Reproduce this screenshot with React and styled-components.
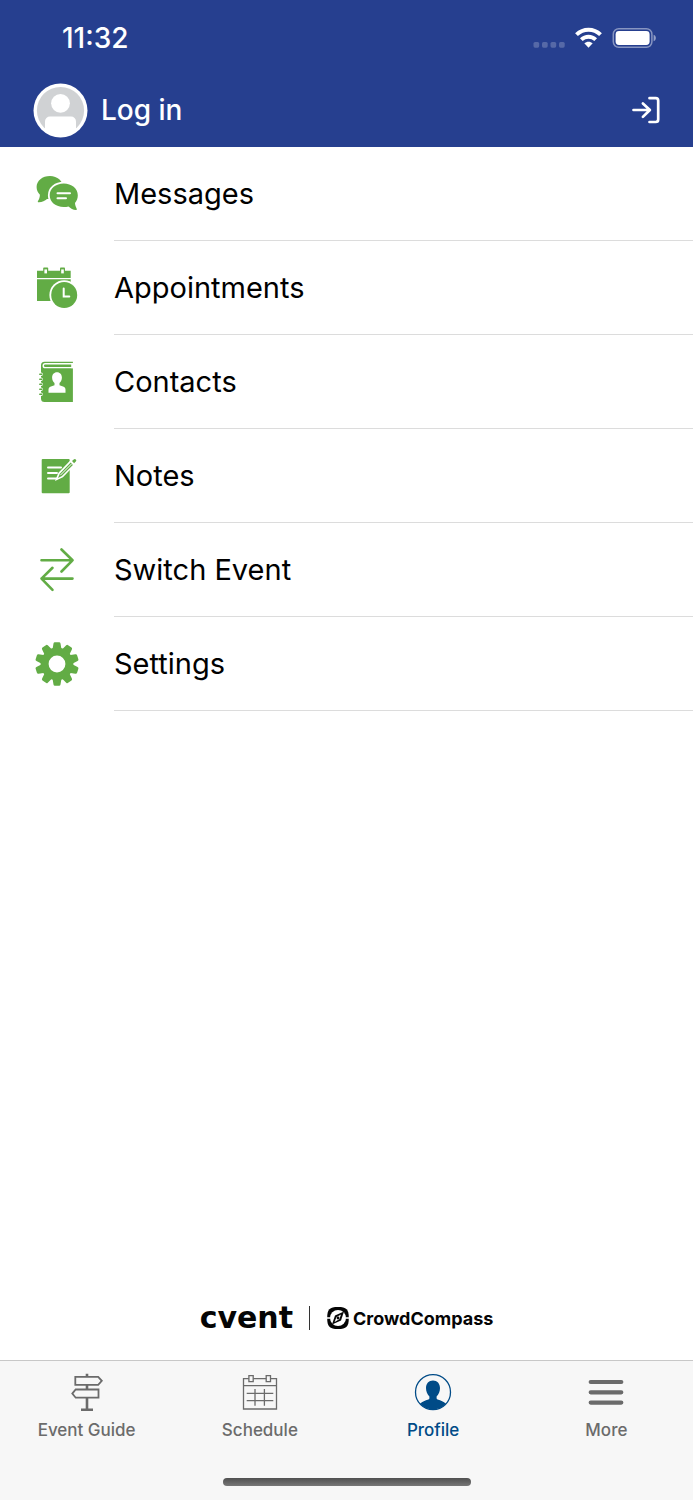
import React from "react";
import styled, { createGlobalStyle } from "styled-components";

const GlobalStyle = createGlobalStyle`
  * {
    box-sizing: border-box;
  }
  body {
    margin: 0;
    background: #fff;
    font-family: Inter, "Liberation Sans", sans-serif;
  }
`;

const Screen = styled.div`
  min-height: 100vh;
  display: flex;
  flex-direction: column;
`;

const Header = styled.header`
  background: #263f8f;
  color: #fff;
`;

const StatusBar = styled.div`
  display: flex;
  align-items: center;
  justify-content: space-between;
  height: 75px;
  padding: 0 36px 0 62px;
`;

const Time = styled.time`
  font-size: 28px;
  font-weight: 500;
`;

const StatusIcons = styled.div`
  display: flex;
  align-items: center;
  gap: 10px;
`;

const AccountBar = styled.div`
  display: flex;
  align-items: center;
  justify-content: space-between;
  height: 72px;
  padding: 0 30px 2px 33px;
`;

const HeaderButton = styled.button`
  display: flex;
  align-items: center;
  gap: 13px;
  padding: 0;
  border: 0;
  background: none;
  color: inherit;
  font: inherit;
  font-size: 28px;
  font-weight: 500;
  cursor: pointer;
`;

const Menu = styled.ul`
  margin: 0;
  padding: 0;
  list-style: none;
`;

const MenuLink = styled.a`
  display: flex;
  align-items: stretch;
  height: 94px;
  padding-left: 35px;
  color: #000;
  text-decoration: none;
`;

const MenuIcon = styled.svg`
  align-self: center;
  flex: none;
  width: 44px;
  height: 44px;
  margin-right: 35px;
  color: #62ac45;
`;

const MenuLabel = styled.span`
  flex: 1;
  display: flex;
  align-items: center;
  border-bottom: 1px solid #dcdcdc;
  font-size: 29px;
`;

const Brand = styled.div`
  margin-top: auto;
  padding-bottom: 29px;
  display: flex;
  align-items: center;
  justify-content: center;
  color: #050505;
`;

const Cvent = styled.span`
  font-family: "DejaVu Sans", sans-serif;
  font-size: 30px;
  font-weight: 700;
  line-height: 26px;
`;

const Divider = styled.span`
  width: 1px;
  height: 24px;
  margin: 0 16px;
  background: #333;
`;

const CrowdCompass = styled.span`
  display: flex;
  align-items: center;
  gap: 3px;
  font-size: 18px;
  font-weight: 700;
`;

const Footer = styled.footer`
  display: flex;
  flex-direction: column;
  align-items: center;
  height: 140px;
  border-top: 1px solid #c8c8c8;
  background: #f7f7f7;
`;

const Tabs = styled.nav`
  align-self: stretch;
  display: flex;
`;

const Tab = styled.a`
  flex: 1;
  display: flex;
  flex-direction: column;
  align-items: center;
  gap: 8px;
  padding-top: 11px;
  color: ${(props) => (props.$active ? "#004b87" : "#6b6b6b")};
  font-size: 17px;
  font-weight: 500;
  line-height: 20px;
  text-decoration: none;
`;

const HomeIndicator = styled.div`
  width: 248px;
  height: 8px;
  margin: auto 0 14px;
  border-radius: 4px;
  background: linear-gradient(#505050, #777);
`;

const Signal = () => (
  <svg width="32" height="22" viewBox="0 0 32 22" fill="#fff" opacity="0.22">
    {[0.5, 9, 17.5, 26].map((x) => (
      <rect key={x} x={x} y="15" width="5.700" height="5.700" rx="1.600" />
    ))}
  </svg>
);

const Wifi = () => (
  <svg width="27" height="22" viewBox="0 0 27 22" fill="none" stroke="#fff">
    <path d="M1.500 7.600C8.300 1 18.700 1 25.500 7.600" strokeWidth="4" />
    <path d="M6.300 12.700c4.200-4 10.200-4 14.400 0" strokeWidth="3.900" />
    <path d="M9.300 16.300c2.500-2.100 5.900-2.100 8.400 0l-4.200 4.400z" fill="#fff" stroke="none" />
  </svg>
);

const Battery = () => (
  <svg width="45" height="22" viewBox="0 0 45 22">
    <rect x="1.300" y="1.700" width="38.600" height="18.600" rx="5.500" fill="none" stroke="#fff" strokeOpacity="0.45" strokeWidth="1.500" />
    <rect x="3.600" y="4" width="34" height="14" rx="3.400" fill="#fff" />
    <path d="M41.600 7.700c3 .8 3 5.800 0 6.600z" fill="#fff" fillOpacity="0.5" />
  </svg>
);

const Avatar = () => (
  <svg width="55" height="55" viewBox="0 0 55 55">
    <circle cx="27.500" cy="27.500" r="27" fill="#fff" />
    <circle cx="27.500" cy="27.500" r="23.600" fill="#d0d2d4" />
    <circle cx="27.500" cy="20.300" r="9.400" fill="#fff" />
    <path d="M12 46v-7.500a5 5 0 0 1 5-5h21a5 5 0 0 1 5 5V46c-8 8-23 8-31 0z" fill="#fff" />
  </svg>
);

const LoginArrow = () => (
  <svg width="36" height="36" viewBox="0 0 36 36" fill="none" stroke="#fff" strokeWidth="2.700" strokeLinecap="round" strokeLinejoin="round">
    <path d="M6.500 18h16M15.900 11.500l7 6.500-7 6.900M22.500 6.200h6.200a2.500 2.500 0 0 1 2.500 2.500v18.800a2.500 2.500 0 0 1-2.500 2.500h-6.200" />
  </svg>
);

const MessagesIcon = () => (
  <MenuIcon viewBox="0 0 44 44" fill="currentColor">
    <path d="M15 4C7.300 4 1.600 8.800 1.600 15c0 3 1.200 5.600 3.300 7.700C4.900 25 4 27.500 3 29c-.6 1 0 1.300 1 1.200 3.200-.3 6-1.600 8-3.300 9 1.300 16-4 16-11.900C28 9 22.500 4 15 4z" />
    <path
      d="M28.700 11.500c-7.900 0-14 5-14 11.800S20.800 35 28.700 35c1.800 0 3.400-.2 4.800-.6 2 1.900 4.700 3.300 7.400 3.500.9.100 1.200-.4.800-1.200-.9-1.600-1.600-3.700-1.700-5.600 1.800-2.200 2.800-4.900 2.800-7.800 0-6.800-6.200-11.800-14.100-11.800z"
      stroke="#fff"
      strokeWidth="3.600"
      paintOrder="stroke"
    />
    <path d="M22.500 21.300h12.500M22.500 26.300h8.500" stroke="#fff" strokeWidth="2" strokeLinecap="round" />
  </MenuIcon>
);

const AppointmentsIcon = () => (
  <MenuIcon viewBox="0 0 44 44" fill="currentColor">
    <path d="M2 4.700h33.700V35H2z" />
    <path d="M2 12.600h34" stroke="#fff" strokeWidth="1.400" />
    {[8.2, 25].map((x) => (
      <g key={x}>
        <rect x={x} y="1.600" width="5" height="6.600" rx="0.800" />
        <rect x={x + 1.2} y="3.400" width="2.600" height="4" fill="#fff" />
      </g>
    ))}
    <circle cx="29.200" cy="29" r="14.800" fill="#fff" />
    <circle cx="29.200" cy="29" r="13" />
    <path d="M28.700 22.500v8h5.600" fill="none" stroke="#fff" strokeWidth="2" strokeLinecap="round" />
  </MenuIcon>
);

const ContactsIcon = () => (
  <MenuIcon viewBox="0 0 44 44" fill="currentColor">
    <path d="M9.500 1.700H37.900v40.300H9.500A3.500 3.500 0 0 1 6 38.500V5.200a3.500 3.500 0 0 1 3.500-3.500z" />
    <path d="M38 3.800H10.200c-2.600 0-2.600 3.800 0 3.800H38" fill="none" stroke="#fff" strokeWidth="1.400" />
    <path d="M36.200 3h2v5.200h-2z" fill="#fff" />
    {[14.3, 19.3, 24.3, 29.3, 34.3].map((y) => (
      <g key={y}>
        <circle cx="6.200" cy={y} r="1.700" fill="#fff" />
        <rect x="4" y={y - 0.8} width="3.600" height="1.600" rx="0.800" />
      </g>
    ))}
    <path
      d="M22 12.300c-3.100 0-4.900 2.300-4.900 5.300 0 2.300 1 4.500 2.400 5.500v2.100l-4.200 1.600c-1.200.5-1.800 1.600-1.800 3v3h17v-3c0-1.400-.6-2.500-1.800-3l-4.200-1.600v-2.100c1.400-1 2.400-3.200 2.400-5.500 0-3-1.800-5.300-4.900-5.300z"
      fill="#fff"
    />
  </MenuIcon>
);

const NotesIcon = () => (
  <MenuIcon viewBox="0 0 44 44" fill="currentColor">
    <rect x="6.700" y="5" width="28" height="34.300" rx="1" />
    <path d="M13 13.400h13M13 18.900h9M13 24.400h8.500" stroke="#fff" strokeWidth="2" strokeLinecap="round" />
    <path d="M21.700 25.200l2.500-6L36.200 6.700l3.200 3.200-12 12.500z" fill="#fff" stroke="#fff" strokeWidth="1.800" />
    <path d="M23 24l1.800-4.300L35.700 8.600l2.200 2.300-11 11.100zM37 7.100l1.700-1.700a1.500 1.500 0 0 1 2.100 2.200l-1.700 1.700z" />
    <path d="M25.300 21.200L36.800 9.700" stroke="#fff" strokeWidth="1" />
  </MenuIcon>
);

const SwitchIcon = () => (
  <MenuIcon viewBox="0 0 44 44" fill="none" stroke="currentColor" strokeWidth="2.600" strokeLinecap="round" strokeLinejoin="round">
    <path d="M6.500 12.300h31M26.500 1.500l11 10.800-11 11.200" />
    <path d="M37.500 30.600h-31M17.500 19.800l-11 10.800 11 11.200" />
  </MenuIcon>
);

const SettingsIcon = () => (
  <MenuIcon viewBox="0 0 44 44" fill="currentColor">
    {[0, 36, 72, 108, 144, 180, 216, 252, 288, 324].map((angle) => (
      <path
        key={angle}
        d="M17.400 8l1.100-6.500q.2-1.300 1.400-1.300h4.200q1.200 0 1.400 1.300l1.100 6.500z"
        transform={`rotate(${angle} 22 22)`}
      />
    ))}
    <circle cx="22" cy="22" r="12.400" fill="none" stroke="currentColor" strokeWidth="8" />
  </MenuIcon>
);

const CompassIcon = () => (
  <svg width="24" height="24" viewBox="0 0 24 24">
    <path d="M12 1c8.500 0 10.800 2.300 10.800 11S20.500 23 12 23 1.200 20.700 1.200 12 3.500 1 12 1z" fill="#050505" />
    <circle cx="12" cy="12" r="8" fill="#fff" />
    <path d="M0 12h4.500M19.500 12H24" stroke="#fff" strokeWidth="1.400" />
    <path d="M18 5.500L15 14.500 6 18.500 9 9.500z" fill="#050505" />
    <path d="M15 8.500l-1.700 4.700-4.700 2.700 1.900-4.900z" fill="#fff" />
    <circle cx="12" cy="12" r="1.400" fill="#050505" />
  </svg>
);

const GuideIcon = () => (
  <svg width="40" height="40" viewBox="0 0 40 40" fill="none" stroke="currentColor" strokeWidth="1.800">
    <path d="M20 1.800v2.500M20 13v4.300M20 25.700v12M14 37.700h12" strokeWidth="2.600" />
    <path d="M8.300 4.800h22.900l3.600 4-3.600 4H8.300zM31.500 17.500H8.700l-3.400 4.100 3.400 4.100h22.800z" />
  </svg>
);

const ScheduleIcon = () => (
  <svg width="40" height="40" viewBox="0 0 40 40" fill="none" stroke="currentColor" strokeWidth="1.300">
    <path d="M3.500 6.700h33V37h-33zM3.500 13.600h33M6.700 21.400h26.600M6.700 28.700h26.600M15 17v16.700M24.400 17v16.700" />
    <path d="M8.900 3.700h4.300v6H8.900zM26.200 3.700h4.300v6h-4.300z" fill="#f7f7f7" />
  </svg>
);

const ProfileIcon = () => (
  <svg width="40" height="40" viewBox="0 0 40 40" fill="currentColor">
    <circle cx="20" cy="20.200" r="17.500" fill="none" stroke="currentColor" strokeWidth="1.300" />
    <path d="M20 8.500c-4.200 0-7 3-7 7.600 0 3.300 1.300 6.500 3.400 8.300v1.800c0 .7-.4 1.100-1 1.300-3.400 1-6 2.200-8.300 4.200a17.500 17.500 0 0 0 25.800 0c-2.300-2-4.900-3.200-8.300-4.200-.6-.2-1-.6-1-1.300v-1.800c2.100-1.800 3.400-5 3.400-8.300 0-4.600-2.800-7.600-7-7.600z" />
  </svg>
);

const MoreIcon = () => (
  <svg width="40" height="40" viewBox="0 0 40 40" stroke="currentColor" strokeWidth="4.200" strokeLinecap="round">
    <path d="M4.700 10h30.600M4.700 20.300h30.600M4.700 30.600h30.600" />
  </svg>
);

const menuItems = [
  { label: "Messages", Icon: MessagesIcon },
  { label: "Appointments", Icon: AppointmentsIcon },
  { label: "Contacts", Icon: ContactsIcon },
  { label: "Notes", Icon: NotesIcon },
  { label: "Switch Event", Icon: SwitchIcon },
  { label: "Settings", Icon: SettingsIcon },
];

const tabs = [
  { label: "Event Guide", Icon: GuideIcon },
  { label: "Schedule", Icon: ScheduleIcon },
  { label: "Profile", Icon: ProfileIcon, active: true },
  { label: "More", Icon: MoreIcon },
];

export default function App() {
  return (
    <Screen>
      <GlobalStyle />
      <Header>
        <StatusBar>
          <Time>11:32</Time>
          <StatusIcons>
            <Signal />
            <Wifi />
            <Battery />
          </StatusIcons>
        </StatusBar>
        <AccountBar>
          <HeaderButton type="button">
            <Avatar />
            Log in
          </HeaderButton>
          <HeaderButton type="button" aria-label="Log in">
            <LoginArrow />
          </HeaderButton>
        </AccountBar>
      </Header>
      <Menu>
        {menuItems.map(({ label, Icon }) => (
          <li key={label}>
            <MenuLink href="#">
              <Icon />
              <MenuLabel>{label}</MenuLabel>
            </MenuLink>
          </li>
        ))}
      </Menu>
      <Brand>
        <Cvent>cvent</Cvent>
        <Divider />
        <CrowdCompass>
          <CompassIcon />
          CrowdCompass
        </CrowdCompass>
      </Brand>
      <Footer>
        <Tabs>
          {tabs.map(({ label, Icon, active }) => (
            <Tab key={label} href="#" $active={active} aria-current={active ? "page" : undefined}>
              <Icon />
              {label}
            </Tab>
          ))}
        </Tabs>
        <HomeIndicator />
      </Footer>
    </Screen>
  );
}
